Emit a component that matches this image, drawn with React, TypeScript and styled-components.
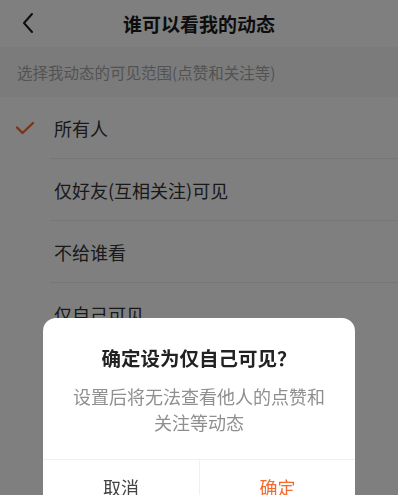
import React from 'react';
import styled, { createGlobalStyle } from 'styled-components';

const GlobalStyle = createGlobalStyle`
  html, body {
    margin: 0;
    padding: 0;
    background: #fff;
    font-family: "Noto Sans CJK SC", "Noto Sans", sans-serif;
    overflow: hidden;
  }
`;

const Page = styled.div`
  min-height: 100vh;
  background: #fff;
  display: flex;
  flex-direction: column;
`;

const NavBar = styled.div`
  height: 47px;
  display: flex;
  align-items: center;
  justify-content: center;
  position: relative;
  flex-shrink: 0;
`;

const BackButton = styled.button`
  position: absolute;
  left: 16px;
  top: 10px;
  width: 24px;
  height: 26px;
  border: none;
  background: none;
  padding: 0;
  display: flex;
  align-items: center;
  justify-content: center;
`;

const NavTitle = styled.h1`
  margin: 0;
  font-size: 19px;
  font-weight: 700;
  color: #1b1b1b;
  line-height: 1;
`;

const SectionHeader = styled.div`
  height: 50px;
  background: #f6f6f6;
  display: flex;
  align-items: center;
  padding: 0 17px;
  font-size: 15.5px;
  color: #a6a6a6;
`;

const List = styled.div`
  display: flex;
  flex-direction: column;
`;

const Row = styled.div`
  height: 62px;
  display: flex;
  align-items: center;
  position: relative;
`;

const CheckSlot = styled.div`
  width: 54px;
  display: flex;
  align-items: center;
  justify-content: center;
  padding-right: 4px;
  box-sizing: border-box;
`;

const RowLabel = styled.div<{ $last?: boolean }>`
  flex: 1;
  align-self: stretch;
  display: flex;
  align-items: center;
  font-size: 18px;
  color: #333;
  border-bottom: ${(p) => (p.$last ? 'none' : '1px solid #ececec')};
  margin-left: -4px;
  padding-left: 4px;
`;

const Mask = styled.div`
  position: fixed;
  inset: 0;
  background: rgba(0, 0, 0, 0.5);
`;

const Dialog = styled.div`
  position: fixed;
  left: 43px;
  top: 318px;
  width: 312px;
  background: #fff;
  border-radius: 13px;
  display: flex;
  flex-direction: column;
  overflow: hidden;
`;

const DialogTitle = styled.div`
  padding-top: 28px;
  text-align: center;
  font-size: 19.5px;
  font-weight: 700;
  color: #222;
  line-height: 24px;
`;

const DialogBody = styled.div`
  padding: 13px 24px 24px;
  text-align: center;
  font-size: 18px;
  line-height: 26px;
  color: #8f8f8f;
`;

const Actions = styled.div`
  display: grid;
  grid-template-columns: 1fr 1fr;
  border-top: 1px solid #f0f0f0;
`;

const ActionButton = styled.button<{ $primary?: boolean }>`
  height: 54px;
  border: none;
  background: none;
  font-family: inherit;
  font-size: 18px;
  padding: 0;
  color: ${(p) => (p.$primary ? '#f4692c' : '#444')};
  & + & {
    border-left: 1px solid #f0f0f0;
  }
`;

const options = ['所有人', '仅好友(互相关注)可见', '不给谁看', '仅自己可见'];

export default function App() {
  const selected = 0;
  return (
    <>
      <GlobalStyle />
      <Page>
        <NavBar>
          <BackButton aria-label="返回">
            <svg width="14" height="22" viewBox="0 0 14 22" fill="none">
              <path d="M11 2 L3 11 L11 20" stroke="#1b1b1b" strokeWidth="2" strokeLinecap="round" strokeLinejoin="round" />
            </svg>
          </BackButton>
          <NavTitle>谁可以看我的动态</NavTitle>
        </NavBar>
        <SectionHeader>选择我动态的可见范围(点赞和关注等)</SectionHeader>
        <List>
          {options.map((label, i) => (
            <Row key={label}>
              <CheckSlot>
                {i === selected && (
                  <svg width="20" height="14" viewBox="0 0 20 14" fill="none">
                    <path d="M2 6.5 L7.5 12 L18 2" stroke="#f4692c" strokeWidth="2.4" strokeLinecap="round" strokeLinejoin="round" />
                  </svg>
                )}
              </CheckSlot>
              <RowLabel $last={i === options.length - 1}>{label}</RowLabel>
            </Row>
          ))}
        </List>
      </Page>
      <Mask />
      <Dialog>
        <DialogTitle>确定设为仅自己可见？</DialogTitle>
        <DialogBody>设置后将无法查看他人的点赞和关注等动态</DialogBody>
        <Actions>
          <ActionButton>取消</ActionButton>
          <ActionButton $primary>确定</ActionButton>
        </Actions>
      </Dialog>
    </>
  );
}
